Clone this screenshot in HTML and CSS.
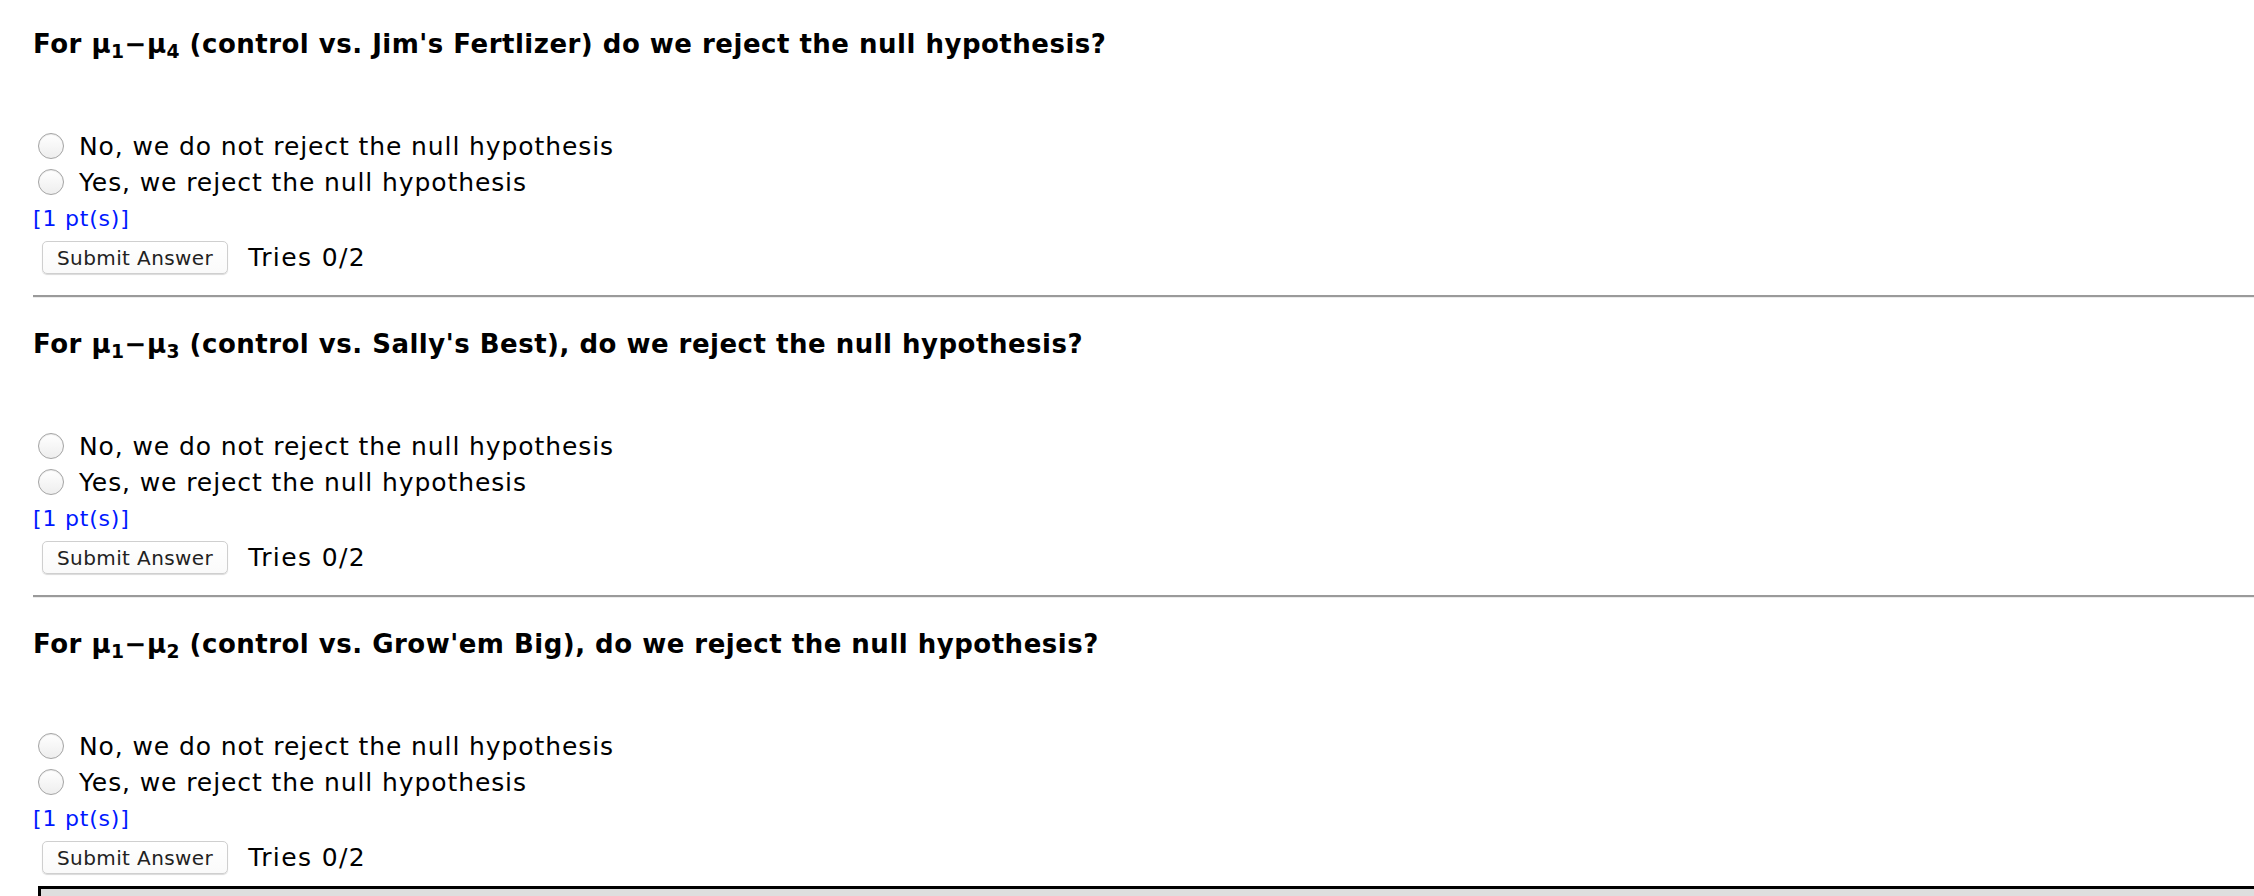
FILE: index.html
```html
<!DOCTYPE html>
<html lang="en">
<head>
<meta charset="utf-8">
<title>Hypothesis questions</title>
<link rel="stylesheet" href="styles.css">
</head>
<body>
<main class="page">
  <section class="q">
    <h3 class="q-title">For μ<sub>1</sub>−μ<sub>4</sub> (control vs. Jim's Fertlizer) do we reject the null hypothesis?</h3>
    <div class="opts">
      <label class="opt"><span class="radio"></span>No, we do not reject the null hypothesis</label>
      <label class="opt"><span class="radio"></span>Yes, we reject the null hypothesis</label>
    </div>
    <div class="pts">[1 pt(s)]</div>
    <div class="submit-row"><button class="btn" type="button">Submit Answer</button><span class="tries">Tries 0/2</span></div>
  </section>
  <hr class="rule">
  <section class="q">
    <h3 class="q-title">For μ<sub>1</sub>−μ<sub>3</sub> (control vs. Sally's Best), do we reject the null hypothesis?</h3>
    <div class="opts">
      <label class="opt"><span class="radio"></span>No, we do not reject the null hypothesis</label>
      <label class="opt"><span class="radio"></span>Yes, we reject the null hypothesis</label>
    </div>
    <div class="pts">[1 pt(s)]</div>
    <div class="submit-row"><button class="btn" type="button">Submit Answer</button><span class="tries">Tries 0/2</span></div>
  </section>
  <hr class="rule">
  <section class="q">
    <h3 class="q-title">For μ<sub>1</sub>−μ<sub>2</sub> (control vs. Grow'em Big), do we reject the null hypothesis?</h3>
    <div class="opts">
      <label class="opt"><span class="radio"></span>No, we do not reject the null hypothesis</label>
      <label class="opt"><span class="radio"></span>Yes, we reject the null hypothesis</label>
    </div>
    <div class="pts">[1 pt(s)]</div>
    <div class="submit-row"><button class="btn" type="button">Submit Answer</button><span class="tries">Tries 0/2</span></div>
  </section>
  <div class="bottom-box"></div>
</main>
</body>
</html>
```

FILE: styles.css
```css
html, body {
  margin: 0;
  padding: 0;
  background: #fff;
  overflow: hidden;
}
body {
  font-family: "DejaVu Sans", Verdana, sans-serif;
  color: #000;
}
.page {
  padding: 28px 0 0 33px;
}
.q {
  display: flex;
  flex-direction: column;
  align-items: flex-start;
}
.q-title {
  margin: 0;
  font-size: 26px;
  letter-spacing: 0.5px;
  line-height: 32px;
  font-weight: bold;
  white-space: nowrap;
}
.q-title sub {
  font-size: 0.72em;
  line-height: 0;
  vertical-align: -0.25em;
}
.opts {
  margin-top: 68px;
  display: flex;
  flex-direction: column;
}
.opt {
  display: flex;
  align-items: center;
  height: 36px;
  font-size: 25px;
  letter-spacing: 0.9px;
  padding-left: 5px;
}
.radio {
  width: 24px;
  height: 24px;
  border-radius: 50%;
  border: 1px solid #a4a4a4;
  background: linear-gradient(#ffffff, #eeeeee);
  box-shadow: inset 0 1px 1px rgba(0,0,0,0.08);
  margin-right: 15px;
  flex: none;
}
.pts {
  margin-top: 1px;
  font-size: 22px;
  letter-spacing: 0.8px;
  line-height: 36px;
  color: #0018ff;
}
.submit-row {
  display: flex;
  align-items: center;
  gap: 20px;
  margin-top: 4px;
  padding-left: 9px;
}
.btn {
  font-family: "DejaVu Sans", Verdana, sans-serif;
  font-size: 20px;
  letter-spacing: 0.4px;
  color: #222;
  height: 33px;
  padding: 0 14px;
  background: linear-gradient(#ffffff, #fafafa);
  border: 1px solid #cfcfcf;
  border-radius: 5px;
  box-shadow: 0 1px 1px rgba(0,0,0,0.15);
}
.tries {
  font-size: 25px;
  letter-spacing: 1.4px;
}
.rule {
  margin: 21px 0 30px 0;
  height: 0;
  border: 0;
  border-top: 2px solid #9a9a9a;
  border-bottom: 1px solid #ececec;
}
.bottom-box {
  margin: 12px 0 0 5px;
  height: 40px;
  border: 3px solid #000;
  border-right: 0;
  background: #dedede;
}
```
